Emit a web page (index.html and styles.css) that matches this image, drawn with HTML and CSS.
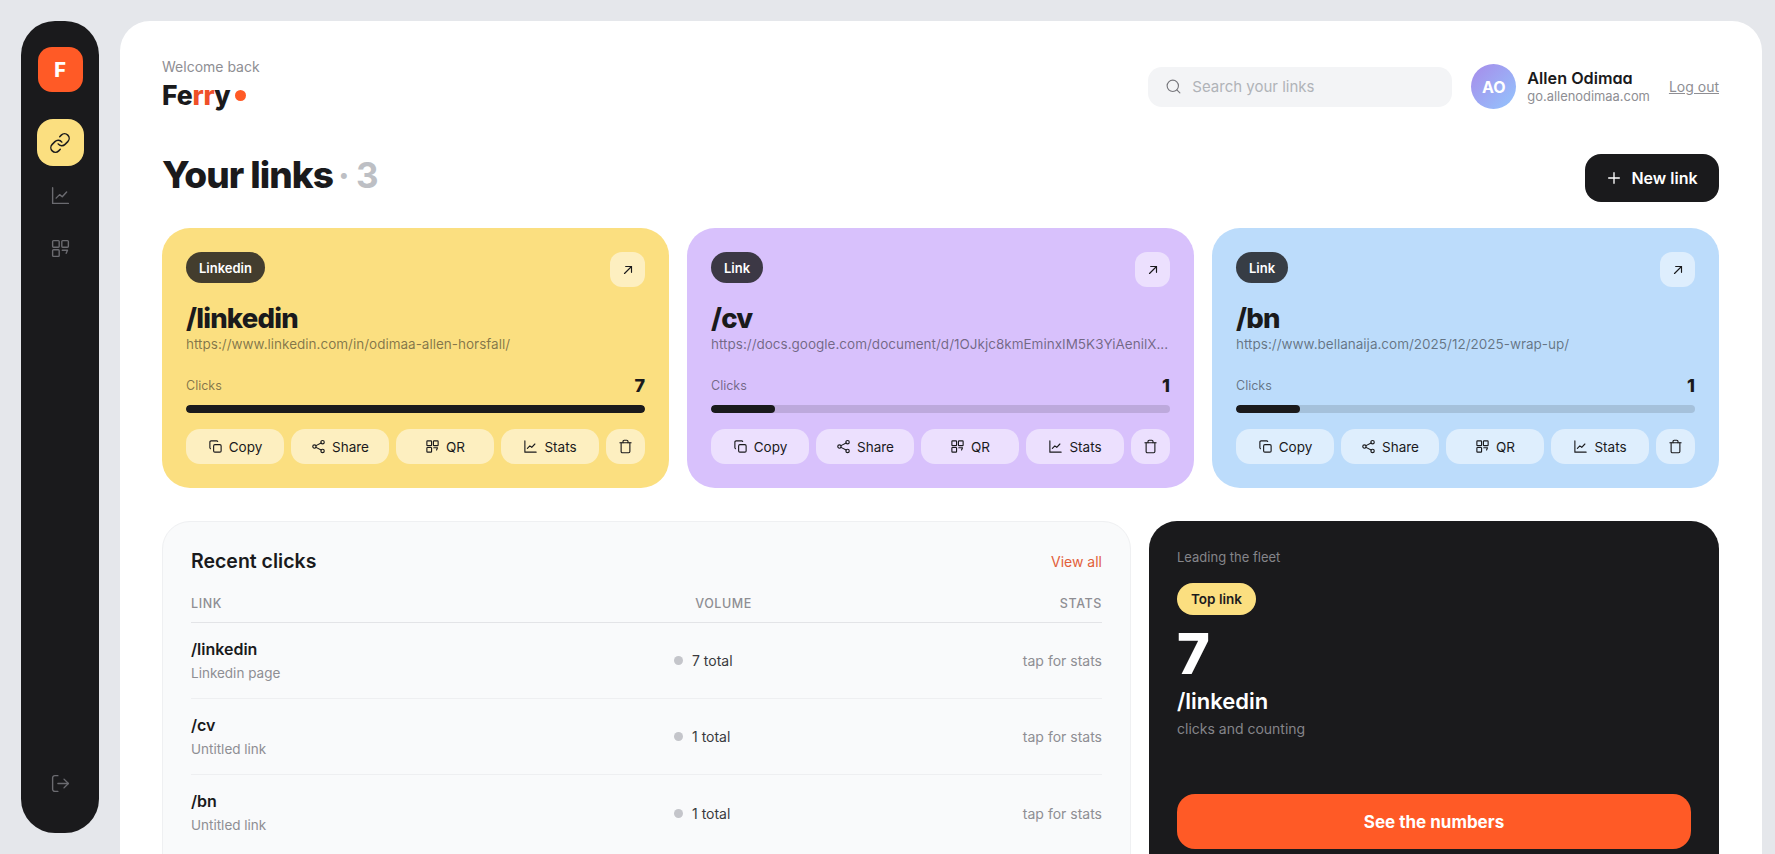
FILE: index.html
```html
<!DOCTYPE html>
<html lang="en">

<head>
    <meta charset="UTF-8">
    <meta name="viewport" content="width=device-width, initial-scale=1.0">
    <title>Ferry</title>
    <link rel="stylesheet" href="styles.css">
</head>

<body>
    <svg class="sprite" xmlns="http://www.w3.org/2000/svg">
        <symbol id="i-link" viewBox="0 0 24 24"><path d="M10 13a5 5 0 0 0 7.5.5l3-3a5 5 0 0 0-7.1-7.1l-1.7 1.7"/><path d="M14 11a5 5 0 0 0-7.5-.5l-3 3a5 5 0 0 0 7.1 7.1l1.7-1.7"/></symbol>
        <symbol id="i-chart" viewBox="0 0 24 24"><path d="M3 3v18h18"/><path d="M7 15l4-4 3 2.5L19 8"/></symbol>
        <symbol id="i-qr" viewBox="0 0 24 24"><rect x="3" y="3" width="7.5" height="7.5" rx="1"/><rect x="13.5" y="3" width="7.5" height="7.5" rx="1"/><rect x="3" y="13.5" width="7.5" height="7.5" rx="1"/><path d="M14 14h6l-1.500 3.500"/></symbol>
        <symbol id="i-logout" viewBox="0 0 24 24"><path d="M9 3H5.500A2.500 2.500 0 0 0 3 5.500v13A2.500 2.500 0 0 0 5.500 21H9"/><path d="M9 12h12"/><path d="M16 7l5 5-5 5"/></symbol>
        <symbol id="i-search" viewBox="0 0 24 24"><circle cx="11" cy="11" r="8"/><path d="M21 21l-4.300-4.300"/></symbol>
        <symbol id="i-plus" viewBox="0 0 24 24"><path d="M12 4v16M4 12h16"/></symbol>
        <symbol id="i-arrow" viewBox="0 0 24 24"><path d="M6 18L18 6"/><path d="M8 6h10v10"/></symbol>
        <symbol id="i-copy" viewBox="0 0 24 24"><rect x="9" y="9" width="12" height="12" rx="2"/><path d="M4 15.500A2 2 0 0 1 3 14V5a2 2 0 0 1 2-2h9a2 2 0 0 1 1.500 1"/></symbol>
        <symbol id="i-share" viewBox="0 0 24 24"><circle cx="18.500" cy="5" r="2.700"/><circle cx="5.500" cy="12" r="2.700"/><circle cx="18.500" cy="19" r="2.700"/><path d="M8 13.400l8.200 4.300M16.200 6.300L8 10.600"/></symbol>
        <symbol id="i-trash" viewBox="0 0 24 24"><path d="M3 6h18"/><path d="M19 6v14a2 2 0 0 1-2 2H7a2 2 0 0 1-2-2V6"/><path d="M8 6V4a2 2 0 0 1 2-2h4a2 2 0 0 1 2 2v2"/></symbol>
    </svg>

    <aside class="sidebar">
        <div class="brand-mark">F</div>
        <a class="side-item active"><svg class="icon"><use href="#i-link"/></svg></a>
        <a class="side-item"><svg class="icon"><use href="#i-chart"/></svg></a>
        <a class="side-item"><svg class="icon"><use href="#i-qr"/></svg></a>
        <a class="side-item side-bottom"><svg class="icon"><use href="#i-logout"/></svg></a>
    </aside>

    <main class="main">
        <header class="topbar">
            <div>
                <p class="welcome">Welcome back</p>
                <div class="wordmark">Fe<span class="accent">rr</span>y<span class="wordmark-dot"></span></div>
            </div>
            <div class="topbar-right">
                <label class="search">
                    <svg class="icon"><use href="#i-search"/></svg>
                    <span>Search your links</span>
                </label>
                <div class="avatar">AO</div>
                <div class="user">
                    <div class="user-name">Allen Odimaa</div>
                    <div class="user-site">go.allenodimaa.com</div>
                </div>
                <a class="logout">Log out</a>
            </div>
        </header>

        <section class="title-row">
            <h1>Your links <span class="count">· 3</span></h1>
            <button class="new-link"><svg class="icon"><use href="#i-plus"/></svg>New link</button>
        </section>

        <section class="cards">
            <article class="card yellow">
                <div class="card-top">
                    <span class="tag">Linkedin</span>
                    <a class="open"><svg class="icon"><use href="#i-arrow"/></svg></a>
                </div>
                <h2>/linkedin</h2>
                <p class="url">https://www.linkedin.com/in/odimaa-allen-horsfall/</p>
                <div class="clicks"><span>Clicks</span><b>7</b></div>
                <div class="bar"><div class="bar-fill" style="width: 100%"></div></div>
                <div class="actions">
                    <button><svg class="icon"><use href="#i-copy"/></svg>Copy</button>
                    <button><svg class="icon"><use href="#i-share"/></svg>Share</button>
                    <button><svg class="icon"><use href="#i-qr"/></svg>QR</button>
                    <button><svg class="icon"><use href="#i-chart"/></svg>Stats</button>
                    <button class="delete"><svg class="icon"><use href="#i-trash"/></svg></button>
                </div>
            </article>
            <article class="card purple">
                <div class="card-top">
                    <span class="tag">Link</span>
                    <a class="open"><svg class="icon"><use href="#i-arrow"/></svg></a>
                </div>
                <h2>/cv</h2>
                <p class="url">https://docs.google.com/document/d/1OJkjc8kmEminxIM5K3YiAenilX...</p>
                <div class="clicks"><span>Clicks</span><b>1</b></div>
                <div class="bar"><div class="bar-fill" style="width: 14%"></div></div>
                <div class="actions">
                    <button><svg class="icon"><use href="#i-copy"/></svg>Copy</button>
                    <button><svg class="icon"><use href="#i-share"/></svg>Share</button>
                    <button><svg class="icon"><use href="#i-qr"/></svg>QR</button>
                    <button><svg class="icon"><use href="#i-chart"/></svg>Stats</button>
                    <button class="delete"><svg class="icon"><use href="#i-trash"/></svg></button>
                </div>
            </article>
            <article class="card blue">
                <div class="card-top">
                    <span class="tag">Link</span>
                    <a class="open"><svg class="icon"><use href="#i-arrow"/></svg></a>
                </div>
                <h2>/bn</h2>
                <p class="url">https://www.bellanaija.com/2025/12/2025-wrap-up/</p>
                <div class="clicks"><span>Clicks</span><b>1</b></div>
                <div class="bar"><div class="bar-fill" style="width: 14%"></div></div>
                <div class="actions">
                    <button><svg class="icon"><use href="#i-copy"/></svg>Copy</button>
                    <button><svg class="icon"><use href="#i-share"/></svg>Share</button>
                    <button><svg class="icon"><use href="#i-qr"/></svg>QR</button>
                    <button><svg class="icon"><use href="#i-chart"/></svg>Stats</button>
                    <button class="delete"><svg class="icon"><use href="#i-trash"/></svg></button>
                </div>
            </article>
        </section>

        <section class="lower">
            <div class="recent">
                <div class="recent-head">
                    <h3>Recent clicks</h3>
                    <a class="view-all">View all</a>
                </div>
                <div class="row row-head">
                    <span>LINK</span>
                    <span class="volume-head">VOLUME</span>
                    <span class="stats-cell">STATS</span>
                </div>
                <div class="row">
                    <div><div class="row-title">/linkedin</div><div class="row-sub">Linkedin page</div></div>
                    <div class="volume"><i></i>7 total</div>
                    <div class="stats-cell">tap for stats</div>
                </div>
                <div class="row">
                    <div><div class="row-title">/cv</div><div class="row-sub">Untitled link</div></div>
                    <div class="volume"><i></i>1 total</div>
                    <div class="stats-cell">tap for stats</div>
                </div>
                <div class="row">
                    <div><div class="row-title">/bn</div><div class="row-sub">Untitled link</div></div>
                    <div class="volume"><i></i>1 total</div>
                    <div class="stats-cell">tap for stats</div>
                </div>
            </div>
            <div class="top-link">
                <p class="fleet">Leading the fleet</p>
                <span class="top-tag">Top link</span>
                <div class="big-num">7</div>
                <div class="top-slug">/linkedin</div>
                <p class="top-sub">clicks and counting</p>
                <button class="numbers">See the numbers</button>
            </div>
        </section>
    </main>
</body>

</html>
```

FILE: styles.css
```css
* {
    box-sizing: border-box;
}

html,
body {
    height: 854px;
    overflow: hidden;
}

body {
    margin: 0;
    padding: 21px 13px 21px 21px;
    display: flex;
    align-items: flex-start;
    gap: 21px;
    background-color: #e5e7eb;
    color: #1a1a1c;
    font-family: Inter, "Liberation Sans", sans-serif;
}

h1,
h2,
h3,
p {
    margin: 0;
}

button {
    border: none;
    font-family: inherit;
}

.sprite {
    display: none;
}

.icon {
    width: 18px;
    height: 18px;
    fill: none;
    stroke: currentColor;
    stroke-width: 2;
    stroke-linecap: round;
    stroke-linejoin: round;
    flex: none;
}

/* sidebar */
.sidebar {
    width: 78px;
    height: 812px;
    flex: none;
    padding: 26px 0;
    display: flex;
    flex-direction: column;
    align-items: center;
    background-color: #1a1a1c;
    border-radius: 34px;
}

.brand-mark {
    width: 45px;
    height: 45px;
    display: flex;
    align-items: center;
    justify-content: center;
    margin-bottom: 27px;
    background-color: #ff5a26;
    border-radius: 14px;
    color: #fff;
    font-size: 20px;
    font-weight: 800;
}

.side-item {
    width: 47px;
    height: 47px;
    display: flex;
    align-items: center;
    justify-content: center;
    margin-bottom: 6px;
    border-radius: 16px;
    color: #6b6b70;
}

.side-item .icon {
    width: 21px;
    height: 21px;
    stroke-width: 1.6;
}

.side-item.active {
    background-color: #fbdf80;
    color: #1a1a1c;
}

.side-item.active .icon {
    width: 22px;
    height: 22px;
}

.side-bottom {
    margin-top: auto;
    margin-bottom: 0;
}

/* main panel */
.main {
    flex: 1;
    min-width: 0;
    height: 1000px;
    padding: 37px 43px 0 42px;
    background-color: #fff;
    border-radius: 30px;
}

.topbar {
    display: flex;
    justify-content: space-between;
    align-items: flex-start;
}

.welcome {
    font-size: 14px;
    line-height: 18px;
    color: #8e8e93;
}

.wordmark {
    display: flex;
    align-items: center;
    margin-top: 2px;
    font-size: 26.5px;
    line-height: 34px;
    font-weight: 800;
    letter-spacing: -0.2px;
}

.accent {
    color: #ef5028;
}

.wordmark-dot {
    width: 11px;
    height: 11px;
    margin-left: 4px;
    background-color: #ff5a26;
    border-radius: 50%;
}

.topbar-right {
    display: flex;
    align-items: center;
    margin-top: 6px;
}

.search {
    width: 304px;
    height: 40px;
    display: flex;
    align-items: center;
    gap: 10px;
    padding-left: 17px;
    background-color: #f3f4f6;
    border-radius: 14px;
    color: #b0b3b8;
    font-size: 15px;
}

.search .icon {
    width: 17px;
    height: 17px;
    color: #77777c;
    stroke-width: 1.6;
}

.avatar {
    width: 45px;
    height: 45px;
    margin-left: 19px;
    display: flex;
    align-items: center;
    justify-content: center;
    background: linear-gradient(135deg, #a78bea, #93c5fd);
    border-radius: 50%;
    color: #fff;
    font-size: 16px;
    font-weight: 700;
}

.user {
    margin-left: 11px;
}

.user-name {
    font-size: 16.2px;
    line-height: 20px;
    font-weight: 600;
    font-feature-settings: "cv11";
}

.user-site {
    font-size: 12.9px;
    line-height: 17px;
    color: #8e8e93;
}

.logout {
    margin-left: 19px;
    color: #8e8e93;
    font-size: 14px;
    text-decoration: underline;
}

.title-row {
    display: flex;
    justify-content: space-between;
    align-items: center;
    margin-top: 42px;
}

h1 {
    padding-bottom: 6px;
    font-size: 37px;
    line-height: 42px;
    font-weight: 800;
    letter-spacing: -1px;
}

.count {
    margin-left: -2px;
    color: #bdbfc4;
    font-weight: 700;
    font-size: 35px;
}

.new-link {
    width: 134px;
    height: 48px;
    display: flex;
    align-items: center;
    justify-content: center;
    gap: 9px;
    background-color: #1a1a1c;
    border-radius: 16px;
    color: #fff;
    font-size: 16px;
    font-weight: 600;
}

.new-link .icon {
    width: 16px;
    height: 16px;
}

/* link cards */
.cards {
    display: grid;
    grid-template-columns: repeat(3, 1fr);
    gap: 18px;
    margin-top: 26px;
}

.card {
    height: 260px;
    padding: 24px;
    border-radius: 28px;
    min-width: 0;
}

.yellow {
    background-color: #fbdf80;
}

.purple {
    background-color: #d8c1fc;
}

.blue {
    background-color: #bcdcfb;
}

.card-top {
    display: flex;
    justify-content: space-between;
    align-items: flex-start;
}

.tag {
    height: 31px;
    padding: 0 13px;
    display: flex;
    align-items: center;
    background-color: rgba(26, 26, 28, 0.82);
    border-radius: 16px;
    color: #fff;
    font-size: 13px;
    font-weight: 600;
}

.open {
    width: 35px;
    height: 35px;
    display: flex;
    align-items: center;
    justify-content: center;
    background-color: rgba(255, 255, 255, 0.5);
    border-radius: 12px;
}

.open .icon {
    width: 14px;
    height: 14px;
}

h2 {
    margin-top: 12px;
    font-size: 27.5px;
    line-height: 38px;
    font-weight: 800;
    letter-spacing: -0.8px;
}

.url {
    margin-top: -2px;
    font-size: 13.5px;
    line-height: 18px;
    color: rgba(26, 26, 28, 0.55);
    white-space: nowrap;
}

.clicks {
    display: flex;
    justify-content: space-between;
    align-items: center;
    margin-top: 21px;
    font-size: 12.5px;
    line-height: 24px;
    color: rgba(26, 26, 28, 0.55);
}

.clicks b {
    color: #1a1a1c;
    font-size: 18px;
    font-weight: 800;
}

.bar {
    height: 8px;
    margin-top: 7px;
    background-color: rgba(26, 26, 28, 0.14);
    border-radius: 4px;
    overflow: hidden;
}

.bar-fill {
    height: 100%;
    background-color: #1a1a1c;
    border-radius: 4px;
}

.actions {
    display: grid;
    grid-template-columns: repeat(4, 1fr) 39px;
    gap: 7px;
    margin-top: 16px;
}

.actions button {
    height: 35px;
    display: flex;
    align-items: center;
    justify-content: center;
    gap: 6px;
    padding: 0;
    background-color: rgba(255, 255, 255, 0.5);
    border-radius: 14px;
    color: #1a1a1c;
    font-size: 13.5px;
}

.actions .icon {
    width: 15px;
    height: 15px;
    stroke-width: 1.8;
}

/* lower section */
.lower {
    display: grid;
    grid-template-columns: 1.7fr 1fr;
    gap: 18px;
    margin-top: 33px;
}

.recent {
    height: 420px;
    padding: 23px 28px;
    background-color: #f9fafb;
    border: 1px solid #eff0f2;
    border-radius: 28px;
}

.recent-head {
    display: flex;
    justify-content: space-between;
    align-items: center;
}

h3 {
    font-size: 19.5px;
    line-height: 32px;
    font-weight: 600;
}

.view-all {
    color: #e2603a;
    font-size: 14px;
}

.row {
    display: grid;
    grid-template-columns: 483px 78px 1fr;
    align-items: center;
    height: 76px;
    border-bottom: 1px solid #eeeff1;
}

.row:last-child {
    border-bottom: none;
}

.row-head {
    height: 33px;
    margin-top: 13px;
    padding-bottom: 6px;
    border-bottom: 1px solid #e3e4e7;
    color: #8e8e93;
    font-size: 12.5px;
    font-weight: 500;
    letter-spacing: 0.6px;
}

.volume-head {
    text-align: right;
}

.stats-cell {
    text-align: right;
    color: #8e8e93;
    font-size: 14px;
}

.row-head .stats-cell {
    font-size: 12.5px;
}

.row-title {
    margin-top: -2px;
    font-size: 16px;
    line-height: 22px;
    font-weight: 600;
}

.row-sub {
    margin-top: 4px;
    color: #8e8e93;
    font-size: 13.5px;
    line-height: 18px;
}

.volume {
    display: flex;
    align-items: center;
    gap: 9px;
    color: #3a3a3e;
    font-size: 14px;
    white-space: nowrap;
}

.volume i {
    width: 9px;
    height: 9px;
    background-color: #c4c5ca;
    border-radius: 50%;
}

.top-link {
    height: 420px;
    padding: 26px 28px;
    background-color: #1a1a1c;
    border-radius: 28px;
    color: #fff;
}

.fleet {
    color: #85858a;
    font-size: 13px;
    line-height: 20px;
}

.top-tag {
    display: inline-block;
    margin-top: 16px;
    padding: 0 14px;
    background-color: #fbdf80;
    border-radius: 16px;
    color: #1a1a1c;
    font-size: 13.5px;
    font-weight: 600;
    line-height: 32px;
}

.big-num {
    margin-top: 8px;
    font-size: 56px;
    line-height: 62px;
    font-weight: 800;
}

.top-slug {
    font-size: 22px;
    line-height: 32px;
    font-weight: 600;
}

.top-sub {
    margin-top: 2px;
    color: #85858a;
    font-size: 14px;
    line-height: 20px;
}

.numbers {
    width: 100%;
    height: 55px;
    margin-top: 55px;
    background-color: #ff5a26;
    border-radius: 18px;
    color: #fff;
    font-size: 17px;
    font-weight: 700;
}
```
